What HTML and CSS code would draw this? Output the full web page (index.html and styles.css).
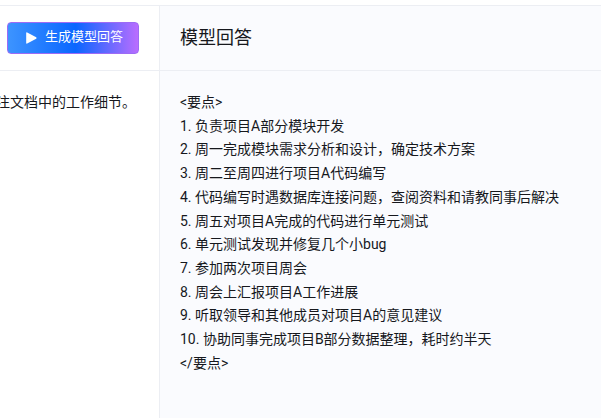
FILE: index.html
```html
<!DOCTYPE html>
<html lang="en">
<head>
<meta charset="UTF-8">
<meta name="viewport" content="width=device-width, initial-scale=1.0">
<title>模型回答</title>
<link rel="stylesheet" href="styles.css">
</head>
<body>
  <div class="panel">
    <div class="left-col">
      <div class="head left-head">
        <button class="gen-btn" type="button">
          <svg class="play-icon" width="11" height="12" viewBox="0 0 11 12"><path d="M1.2 0.4 L10.2 5.2 Q11 6 10.2 6.8 L1.2 11.6 Q0.2 12 0.2 11 L0.2 1 Q0.2 0 1.2 0.4 Z"/></svg>
          <span class="btn-label">生成模型回答</span>
        </button>
      </div>
      <div class="left-body">
        <p class="doc-text">关注文档中的工作细节。</p>
      </div>
    </div>
    <div class="right-col">
      <div class="head right-head">
        <h2>模型回答</h2>
      </div>
      <div class="answer">
        <div>&lt;要点&gt;</div>
        <div>1. 负责项目A部分模块开发</div>
        <div>2. 周一完成模块需求分析和设计，确定技术方案</div>
        <div>3. 周二至周四进行项目A代码编写</div>
        <div>4. 代码编写时遇数据库连接问题，查阅资料和请教同事后解决</div>
        <div>5. 周五对项目A完成的代码进行单元测试</div>
        <div>6. 单元测试发现并修复几个小bug</div>
        <div>7. 参加两次项目周会</div>
        <div>8. 周会上汇报项目A工作进展</div>
        <div>9. 听取领导和其他成员对项目A的意见建议</div>
        <div>10. 协助同事完成项目B部分数据整理，耗时约半天</div>
        <div>&lt;/要点&gt;</div>
      </div>
    </div>
  </div>
</body>
</html>
```

FILE: styles.css
```css
html, body {
  height: 100%;
}
body {
  margin: 0;
  overflow: hidden;
  background-color: #fff;
  color: #16181d;
  font-family: Roboto, "Noto Sans CJK SC", sans-serif;
  padding-top: 5px;
  box-sizing: border-box;
}
.panel {
  display: flex;
  height: 100%;
  border-top: 1px solid #eceef3;
}
.left-col {
  width: 159px;
  flex-shrink: 0;
  overflow: hidden;
}
.right-col {
  flex: 1;
  background-color: #fafbfe;
  border-left: 1px solid #eceef3;
}
.head {
  height: 64px;
  box-sizing: content-box;
  border-bottom: 1px solid #eceef3;
  display: flex;
  align-items: center;
}
.left-head {
  padding-left: 7px;
}
.right-head {
  padding-left: 20px;
}
.right-head h2 {
  margin: 0;
  font-size: 18px;
  line-height: 24px;
  font-weight: 400;
}
.gen-btn {
  width: 132px;
  height: 32px;
  display: flex;
  align-items: center;
  gap: 8px;
  border: 1px solid #9d6bf5;
  border-radius: 4px;
  background: linear-gradient(90deg, #3d94ff 0%, #0a66ff 52%, #b96dff 100%);
  color: #fff;
  font-family: inherit;
  font-size: 13px;
  padding: 0 0 0 18px;
}
.btn-label {
  line-height: 16px;
  margin-bottom: 3px;
}
.play-icon {
  fill: #fff;
}
.left-body {
  display: flex;
  justify-content: flex-end;
  padding: 20px 23px 0 0;
}
.doc-text {
  margin: 0;
  font-size: 14px;
  line-height: 23.7px;
  white-space: nowrap;
}
.answer {
  padding: 20px 20px 0;
  font-size: 14px;
  line-height: 23.7px;
  white-space: nowrap;
}
```
